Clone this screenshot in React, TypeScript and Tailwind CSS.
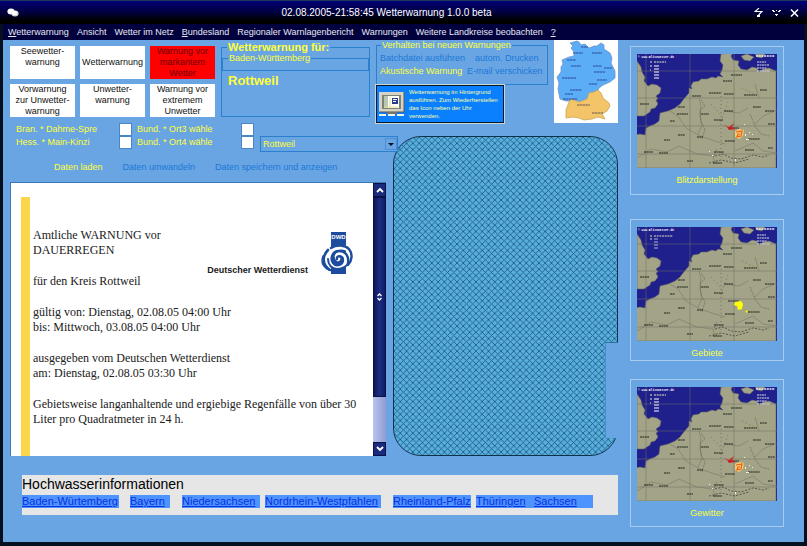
import React from 'react';

const menuItems = [
  { key: 'W', rest: 'etterwarnung' },
  { key: '', rest: 'Ansicht' },
  { key: '', rest: 'Wetter im Netz' },
  { key: 'B', rest: 'undesland' },
  { key: '', rest: 'Regionaler Warnlagenbericht' },
  { key: '', rest: 'Warnungen' },
  { key: '', rest: 'Weitere Landkreise beobachten' },
  { key: '?', rest: '' }
];

const levels = [
  { lines: ['Seewetter-', 'warnung'], active: false },
  { lines: ['Wetterwarnung'], active: false },
  { lines: ['Warnung vor', 'markantem', 'Wetter'], active: true },
  { lines: ['Vorwarnung', 'zur Unwetter-', 'warnung'], active: false },
  { lines: ['Unwetter-', 'warnung'], active: false },
  { lines: ['Warnung vor', 'extremem', 'Unwetter'], active: false }
];

const places = [
  { id: 'ort1', name: 'Bran. * Dahme-Spre' },
  { id: 'ort3', name: 'Bund. * Ort3 wähle' },
  { id: 'ort2', name: 'Hess. * Main-Kinzi' },
  { id: 'ort4', name: 'Bund. * Ort4 wähle' }
];

const floodLinks = [
  { name: 'Baden-Würtemberg', width: 'w-[97px] mr-[11px]' },
  { name: 'Bayern', width: 'w-[40px] mr-[12px]' },
  { name: 'Niedersachsen', width: 'w-[78px] mr-[5px]' },
  { name: 'Nordrhein-Westpfahlen', width: 'w-[116px] mr-[12px]' },
  { name: 'Rheinland-Pfalz', width: 'w-[78px] mr-[5px]' },
  { name: 'Thüringen', width: 'w-[58px]' },
  { name: 'Sachsen', width: 'w-[59px]' }
];

type Overlay = 'storm' | 'area';

const maps: { name: string; overlay: Overlay; box: string }[] = [
  { name: 'Blitzdarstellung', overlay: 'storm', box: 'mb-6 min-h-[149px]' },
  { name: 'Gebiete', overlay: 'area', box: 'mb-[18px] min-h-[142px]' },
  { name: 'Gewitter', overlay: 'storm', box: 'min-h-[148px]' }
];

// x, y and width of the town names on the weather map
const towns = [
  [94, 21, 11], [86, 27, 9], [55, 42, 9], [72, 39, 12], [87, 40, 10], [107, 41, 13],
  [123, 36, 7], [116, 53, 8], [128, 57, 9], [41, 53, 7], [40, 60, 11], [33, 67, 5],
  [64, 60, 8], [87, 57, 9], [77, 66, 9], [91, 74, 11], [111, 85, 12], [88, 87, 10],
  [108, 96, 9], [41, 81, 7], [27, 86, 6], [60, 83, 6], [7, 98, 9], [22, 99, 9],
  [77, 98, 10], [50, 107, 6], [76, 109, 9], [131, 70, 7], [131, 94, 5], [3, 50, 9]
];

const germanTowns = [
  [27, 7, 7], [19, 13, 10], [38, 13, 10], [13, 20, 9], [17, 26, 10], [39, 26, 9], [50, 28, 8],
  [40, 32, 11], [8, 38, 14], [43, 40, 10], [35, 44, 8], [16, 50, 12], [11, 54, 8], [9, 59, 14]
];

const CloudIcon = () => (
  <svg viewBox="0 0 12 9" className="w-3 h-[9px]" aria-hidden="true">
    <ellipse cx="4" cy="3.5" rx="3.6" ry="3" fill="#fff" />
    <ellipse cx="8" cy="5.5" rx="3.6" ry="3" fill="#d5d5d5" />
    <ellipse cx="7.6" cy="5" rx="2.8" ry="2.2" fill="#fff" />
  </svg>
);

const MonitorIcon = () => (
  <svg viewBox="0 0 26 26" className="w-[26px] h-[26px] shrink-0" aria-hidden="true">
    <path d="M0 1h25v20H0z" fill="#d6d3c4" />
    <path d="M25 1v20H0" fill="none" stroke="#5c5a50" />
    <path d="M3 4h19v14H3z" fill="#7c8278" />
    <path d="M5 5h15v12H5z" fill="#fff" />
    <path d="M5 5h4v12H5z" fill="#b8c7b4" />
    <path d="M11 6v10M5 16h14" stroke="#dfe38b" />
    <path d="M13 7h6v6h-6z" fill="#27408a" />
    <path d="M14 8h4v1h-4zM14 10h3v1h-3z" fill="#fff" />
    <path d="M8 21h10v2H8z" fill="#77756a" />
    <path d="M0 23h7v2H0zM9 23h7v2H9zM18 23h7v2h-7z" fill="#f2f2e6" />
  </svg>
);

const DwdLogo = () => (
  <svg viewBox="0 0 33 43" className="w-[33px] h-[43px]" role="img" aria-label="DWD">
    <path d="M11 0h15v42H11z" fill="#1d4c9f" />
    <text x="18.5" y="7" textAnchor="middle" fontSize="6" fontWeight="bold" fill="#fff" fontFamily="Liberation Sans, sans-serif">DWD</text>
    <circle cx="17" cy="26" r="12.5" fill="#fff" />
    <path d="M11 14h15v28H11z" fill="#1d4c9f" />
    <g fill="none" stroke="#fff" strokeWidth="4.5" strokeLinecap="round">
      <path d="M18 27c-4-4 4-8 7-2s-4 12-11 9-7-15 3-18 16 4 15 11" />
    </g>
    <g fill="none" stroke="#1d4c9f" strokeLinecap="round">
      <path d="M17 27c-1-4 6-4 6 1s-7 7-10 3-1-12 6-12 10 6 9 11" strokeWidth="2.4" />
      <path d="M8 18C2 24 2 33 10 38" strokeWidth="2.6" />
      <path d="M3 24c-3 8 2 12 6 14" strokeWidth="1.5" />
      <path d="M11 16c6-4 14-3 18 1 4 5 3 12-1 16" strokeWidth="2.4" />
      <path d="M8 27c0 6 4 10 9 10 6 0 10-3 11-6" strokeWidth="2" />
    </g>
  </svg>
);

const GermanyMap = () => (
  <svg viewBox="0 0 64 83" className="w-16 h-[83px] shrink-0 bg-white" role="img" aria-label="Deutschlandkarte">
    <path
      d="M16 3l7-2 2 1 2 3 4-1 4 4 5-2 3 0 4-3 3 2 0 4 6 4 2 5-1 5 4 8 0 7-5 4-7 3-4 3-2 4-6 2-3 7-9 3-8-3-5 0-6-2-1-5-1-5 1-6-2-6 4-5 0-5 2-3-1-4 7-3 5-1 0-4-3-4 2-2z"
      fill="#5badf6"
      stroke="#7094c8"
      strokeWidth="0.8"
    />
    <path
      d="M44 50l3 3 2 5 6 5 1 3-3 5-5 3 3 5-7-2-6 2-8 1-5-2-6-1-7 1 0-8 3-8 2-3 8 3 8-3 2-6 5-1z"
      fill="#f3c568"
      stroke="#c9a558"
      strokeWidth="0.8"
    />
    {germanTowns.map(([x, y, w]) => (
      <path key={`${x}-${y}`} d={`M${x} ${y}h${w}`} stroke="#26489a" strokeWidth="1.2" strokeDasharray="2.5 0.4" />
    ))}
    <path d="M23 65h13M38 73h11" stroke="#6d5b50" strokeWidth="1.2" strokeDasharray="2.5 0.4" />
  </svg>
);

const WeatherMap = ({ overlay }: { overlay: Overlay }) => (
  <svg viewBox="0 0 140 114" className="w-full block" aria-hidden="true">
    <path d="M0 0h140v114H0z" fill="#20208c" />
    <g fill="#a3a387" stroke="#5f6060" strokeWidth="0.5">
      <path d="M84 0l-1 7 3 4-1 5-2 4 3 3-5-1-2 2-4-1-5 2-6 0-2 2-6 1-2 4 1 3-3-1 0 5-6 7-3 4-5 4-7 3-8 2-1 8-4 3-5 2-4 2-1 7-5-1-5 1v33h141V17l-7-3-6 1-4 3-2-4-5-1-5 3-6-1-3-4 1-4-6-1-2-4 2-3z" />
      <path d="M0 7l4 6 1 5 3 5-1 4 4 5 4-2 5 1 4 3-1 5-4 3 2 3-2 1 2 4-3 4-4 1-1 3-6 4H0z" />
      <path d="M104 2l6-2 7 3-4 4-6-1zM118 0h10l-3 4-5-1z" />
    </g>
    <g fill="none" stroke="#6f7060" strokeWidth="0.5">
      <path d="M9 0v114M53 0v114M97 0v114M0 17h140M0 44h140M0 72h140M0 100h140" />
      <path d="M33 57l8 5 8 12 14 8 12 4 13 4M62 44l2 8-1 10 2 9-4 9M88 57l14 2 9-5M118 70l8-8 14-6M0 104l14-9 16 3 12-6 18 8 16 2M122 44l-4-14M98 97l18-8 10 8 14 2" />
      <path d="M64 46l4 6-5 4 1 12 4 7-3 10M113 60l5 12 6 8 8 2M80 95l-4 9 4 6" stroke="#494b42" strokeDasharray="1.5 1" />
      <path d="M84 38v68M74 50l11 12M91 48l-8 22M105 34l12 6" strokeDasharray="1 3" stroke="#45473e" />
      <path d="M78 102l8-2 8 4 10 1 12-4 10 2 6-2M72 109l12-3 14 3 14-4" stroke="#41443c" strokeDasharray="2 1.5" strokeWidth="0.8" />
    </g>
    {towns.map(([x, y, w]) => (
      <path key={`${x}-${y}`} d={`M${x} ${y}h${w}`} stroke="#24251d" strokeWidth="1.1" strokeDasharray="2 0.4" />
    ))}
    <text x="1" y="4" fontSize="3" fontWeight="bold" fill="#fff" fontFamily="Liberation Mono, monospace">© www.Blitzwetter.de</text>
    <path d="M119 2h19" stroke="#e8e8f0" strokeWidth="1.3" strokeDasharray="2 0.7" />
    <path d="M120 8h9M120 11h12M120 14h10M120 17h13" stroke="#d8d8e8" strokeDasharray="2 0.5" />
    {overlay === 'area' ? (
      <g>
        <path d="M13 9h2M13 12h2M17 9h19" stroke="#dedec0" strokeDasharray="2 0.7" />
        <path d="M17 12h4M17 15h4M17 18h4M17 21h4" stroke="#8080c0" strokeWidth="1.4" />
        <path d="M98 75l6-1 2 3-1 5-4 1-1-4-3-1z" fill="#ff0" />
        <path d="M109 83l2 1-1 2-2-1z" fill="#f4e400" />
      </g>
    ) : (
      <g>
        <path d="M13 8h2M17 8h12M13 12h2M13 16h1" stroke="#e8e8c8" strokeDasharray="2 0.7" />
        <path d="M17 12h5M17 15h5M17 18h5M17 21h5M17 24h5" stroke="#b4b4d8" strokeWidth="1.4" />
        <path d="M86 71l6 2 5-4-2 4 4 2-7 1-2-3z" fill="#c92424" />
        <path d="M98 77l4-2 5 1-1 6-4 3-4-2z" fill="#f7c76a" />
        <path d="M99 78l6-1-1 5-4 1 1-3h2" fill="none" stroke="#e4601a" strokeWidth="1.2" />
        <g fill="#f2f2e4">
          <path d="M108 80h1v2h-1zM109 85h3v1h-3zM115 80h1v1h-1zM107 70h1v1h-1zM72 97h1v1h-1zM98 105h1v2h-1zM112 78h1v1h-1zM75 101h1v1h-1z" />
        </g>
      </g>
    )}
  </svg>
);

const TitleBar = () => (
  <header className="h-6 flex items-center pl-[7px] pr-2 text-white border-t border-[#203858] bg-linear-to-b from-[#000078] via-[#00003c] to-black">
    <CloudIcon />
    <h1 className="flex-1 text-center text-[10px] leading-none">02.08.2005-21:58:45 Wetterwarnung 1.0.0 beta</h1>
    <div className="flex items-center gap-[9px]">
      <button aria-label="Minimieren">
        <svg viewBox="0 0 9 10" className="w-[9px] h-[10px]" fill="none" stroke="#fff">
          <path d="M5 0L1 3.500h7L4.500 7" strokeWidth="1.1" />
          <path d="M3 7h3v2H3z" fill="#fff" stroke="none" />
        </svg>
      </button>
      <button aria-label="Maximieren">
        <svg viewBox="0 0 9 10" className="w-[9px] h-[10px]" fill="#fff">
          <path d="M0 2h2v1h1v1H1V3H0zM7 2h2v1H8v1H6V3h1zM4 2h1v1H4zM3 6h3v1H5v1H4V7H3z" />
        </svg>
      </button>
      <button aria-label="Schließen">
        <svg viewBox="0 0 9 10" className="w-[9px] h-[10px]" stroke="#fff">
          <path d="M1 1.500l7 7M8 1.500l-7 7" strokeWidth="1.6" />
        </svg>
      </button>
    </div>
  </header>
);

const BulletinScrollbar = () => (
  <div className="w-[13px] shrink-0 flex flex-col bg-linear-to-r from-[#b9c3ee] to-[#8f9bd4]">
    <button aria-label="Nach oben" className="h-[14px] flex items-center justify-center bg-[#1b2a7c] border border-[#0a1048]">
      <svg viewBox="0 0 8 6" className="w-2 h-[6px]" fill="none" stroke="#fff" strokeWidth="1.8"><path d="M1 5l3-3 3 3" /></svg>
    </button>
    <div className="h-[200px] flex items-center justify-center border border-[#0a1048] bg-linear-to-r from-[#10185c] via-[#1c2c80] to-[#101c68]">
      <svg viewBox="0 0 5 8" className="w-[5px] h-2" fill="none" stroke="#fff" strokeWidth="1.3"><path d="M0.500 3l2-2 2 2M0.500 5l2 2 2-2" /></svg>
    </div>
    <div className="flex-1" />
    <button aria-label="Nach unten" className="h-[14px] flex items-center justify-center bg-[#1b2a7c] border border-[#0a1048]">
      <svg viewBox="0 0 8 6" className="w-2 h-[6px]" fill="none" stroke="#fff" strokeWidth="1.8"><path d="M1 1l3 3 3-3" /></svg>
    </button>
  </div>
);

const Bulletin = () => (
  <section className="flex border-t border-l border-[#3c78b8] bg-white">
    <div className="flex-1 flex pl-[10px] pt-[14px]">
      <div className="w-[9px] shrink-0 bg-[#fbd54c]" />
      <div className="flex-1 pl-[3px] pt-[31px] pb-[29px] font-['Liberation_Serif',serif] text-[12px] leading-[15px] text-[#202020]">
        <div className="flex justify-between pr-5">
          <div>
            <p className="mb-4">Amtliche WARNUNG vor<br />DAUERREGEN</p>
            <p className="mb-4">für den Kreis Rottweil</p>
          </div>
          <div className="flex items-start gap-3 pt-1">
            <span className="pt-8 font-['Liberation_Sans',sans-serif] text-[9px] leading-[12px] font-bold">Deutscher Wetterdienst</span>
            <DwdLogo />
          </div>
        </div>
        <p className="mb-4">gültig von: Dienstag, 02.08.05 04:00 Uhr<br />bis: Mittwoch, 03.08.05 04:00 Uhr</p>
        <p className="mb-4">ausgegeben vom Deutschen Wetterdienst<br />am: Dienstag, 02.08.05 03:30 Uhr</p>
        <p>Gebietsweise langanhaltende und ergiebige Regenfälle von über 30<br />Liter pro Quadratmeter in 24 h.</p>
      </div>
    </div>
    <BulletinScrollbar />
  </section>
);

const HatchedPanel = () => (
  <div className="relative flex-1 mt-[13px]">
    <div className="h-full overflow-hidden rounded-[28px] border border-[#10304c] bg-[#5aaedb]">
      <svg className="w-full h-full" aria-hidden="true">
        <defs>
          <pattern id="hatch" width="6.3" height="6.3" patternUnits="userSpaceOnUse">
            <path d="M-1 -1l8.300 8.300M7.300 -1L-1 7.300" stroke="#1c5d8a" strokeWidth="0.9" />
          </pattern>
        </defs>
        <rect width="100%" height="100%" fill="url(#hatch)" />
      </svg>
    </div>
    <div className="absolute right-0 top-[206px] w-[13px] h-24 bg-[#69a5e3] border-t border-l border-t-[#2f6f9f] border-l-[#4a90c8]" />
  </div>
);

export default function App() {
  return (
    <div className="min-h-screen flex flex-col bg-[#04101e] font-['Liberation_Sans',Arial,sans-serif] text-[9px] leading-[11px]">
      <TitleBar />
      <nav className="h-4 flex items-center gap-2 mx-[3px] pl-[5px] bg-[#00003c] text-[#e8e8f4] whitespace-nowrap">
        {menuItems.map((item) => (
          <button key={item.key + item.rest}>
            {item.key && <span className="underline">{item.key}</span>}
            {item.rest}
          </button>
        ))}
      </nav>

      <main className="flex-1 flex gap-3 mx-[3px] mb-1 pl-[7px] pr-5 bg-[#69a5e3]">
        <div className="flex-1 min-w-0">
          <div className="flex gap-[6px]">
            {/* Warning levels */}
            <div className="grid grid-cols-[65px_65px_65px] grid-rows-[33px_33px] gap-[5px] pt-[6px]">
              {levels.map((level) => (
                <button
                  key={level.lines.join(' ')}
                  className={`flex flex-col items-center whitespace-nowrap
                    ${level.lines.length === 1 ? 'justify-center' : 'justify-start'}
                    ${level.active ? 'bg-[#ff0000] text-[#6c0000]' : 'bg-white text-[#101010]'}`}
                >
                  {level.lines.map((line) => (
                    <span key={line}>{line}</span>
                  ))}
                </button>
              ))}
            </div>

            {/* Selected district */}
            <fieldset className="flex-1 min-w-0 h-[76px] mt-[1px] border border-[#2a80cc] text-[#ffff38]">
              <legend className="ml-[5px] px-[1px] text-[11px] leading-[12px] font-bold">Wetterwarnung für:</legend>
              <fieldset className="h-[18px] border border-[#2a80cc]">
                <legend className="ml-[5px] px-[1px] leading-[10px]">Baden-Württemberg</legend>
              </fieldset>
              <p className="pl-[6px] pt-[2px] text-[13px] leading-[15px] font-bold">Rottweil</p>
            </fieldset>

            {/* Alert options */}
            <div className="w-[172px]">
              <fieldset className="h-[45px] border border-[#2a80cc] text-[#1c78d8]">
                <legend className="ml-1 px-[1px] text-[#ffff38]">Verhalten bei neuen Warnungen</legend>
                <div className="grid grid-cols-[87px_1fr] gap-y-[2px] pl-[3px] pt-[2px] whitespace-nowrap">
                  <button className="text-left">Batchdatei ausführen</button>
                  <button className="text-left pl-2">autom. Drucken</button>
                  <button className="text-left text-[#ffff38]">Akustische Warnung</button>
                  <button className="text-left">E-mail verschicken</button>
                </div>
              </fieldset>
              <button className="w-[128px] h-[38px] flex items-center gap-1 pl-[2px] border border-[#08182c] outline-1 outline-[#c8d8d0] bg-[#0a80ff] text-left text-[6px] leading-[8px] text-[#ffffa0]">
                <MonitorIcon />
                <span className="whitespace-nowrap">
                  Wetterwarnung im Hintergrund<br />
                  ausführen. Zum Wiederherstellen<br />
                  das Icon neben der Uhr<br />
                  verwenden.
                </span>
              </button>
            </div>
            <GermanyMap />
          </div>

          <div className="flex gap-[7px]">
            <div className="w-[376px] shrink-0">
              {/* Further places */}
              <div className="flex gap-[6px]">
                <div className="grid grid-cols-[103px_18px_104px_13px] content-start pl-[6px] text-[#ffff38]">
                  {places.map((place) => (
                    <React.Fragment key={place.id}>
                      <label htmlFor={place.id} className="leading-[13px]">{place.name}</label>
                      <input id={place.id} type="checkbox" className="appearance-none block w-[13px] h-[13px] bg-white border border-[#4a86c4]" />
                    </React.Fragment>
                  ))}
                </div>
                <div className="relative z-10 flex-1 -mr-3 mt-[13px]">
                  <select
                    aria-label="Landkreis"
                    className="appearance-none block w-full h-4 pl-[2px] bg-[#69a5e3] border border-[#2a80cc] text-[#ffff38] leading-[14px]"
                  >
                    <option>Rottweil</option>
                  </select>
                  <span className="pointer-events-none absolute right-[1px] top-[2px] w-3 h-3 flex items-center justify-center border border-[#4a90d8]">
                    <svg viewBox="0 0 6 3" className="w-[6px] h-[3px]" fill="#001028"><path d="M0 0h6L3 3z" /></svg>
                  </span>
                </div>
              </div>

              <div className="h-[30px] flex items-center gap-5 pl-11 text-[#1c78d8]">
                <button className="text-[#ffff38]">Daten laden</button>
                <button>Daten umwandeln</button>
                <button>Daten speichern und anzeigen</button>
              </div>

              <Bulletin />
            </div>
            <HatchedPanel />
          </div>

          {/* Flood information */}
          <section className="ml-3 mt-[19px] h-10 bg-[#e6e6e6]">
            <h2 className="pt-[1px] text-[14px] leading-[16px] text-black">Hochwasserinformationen</h2>
            <div className="flex pt-[3px]">
              {floodLinks.map((link) => (
                <a key={link.name} href="#" className={`${link.width} text-[11px] leading-[13px] whitespace-nowrap underline text-[#0a30e0] bg-[#4d94ff]`}>
                  {link.name}
                </a>
              ))}
            </div>
          </section>
        </div>

        {/* Map previews */}
        <aside className="w-[154px] shrink-0 pt-[6px]">
          {maps.map((map) => (
            <button key={map.name} className={`${map.box} w-full flex flex-col px-[6px] pt-[7px] border border-[#a8ccf0] text-center text-[#ffff38]`}>
              <WeatherMap overlay={map.overlay} />
              <span className="w-full pt-[7px]">{map.name}</span>
            </button>
          ))}
        </aside>
      </main>
    </div>
  );
}
